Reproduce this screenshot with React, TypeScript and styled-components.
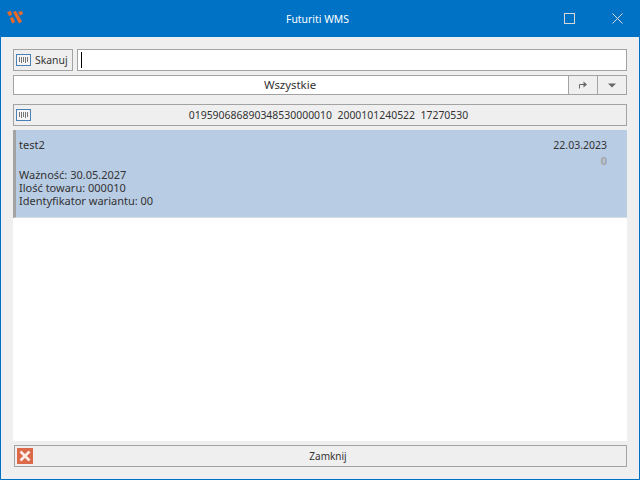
import styled, { createGlobalStyle } from "styled-components";

const GlobalStyle = createGlobalStyle`
  html, body {
    margin: 0;
    padding: 0;
    background: #0072c6;
  }
`;

const BORDER = "#a3a3a3";

const Window = styled.div`
  box-sizing: border-box;
  width: 640px;
  height: 480px;
  display: flex;
  flex-direction: column;
  border: 1px solid #0072c6;
  border-top: 0;
  background: #efefef;
  font-family: "Noto Sans", "DejaVu Sans", sans-serif;
  font-size: 11px;
  color: #333;
  overflow: hidden;
`;

const TitleBar = styled.div`
  height: 37px;
  flex: none;
  display: flex;
  align-items: center;
  background: #0072c6;
  color: #fff;
  margin: 0 -1px;
`;

const LogoBox = styled.div`
  width: 37px;
  display: flex;
  padding: 0 0 1px 7px;
  box-sizing: border-box;
`;

const Title = styled.div`
  flex: 1;
  text-align: center;
  padding-left: 50px;
  font-size: 10.4px;
`;

const WinButton = styled.div`
  width: 46px;
  height: 37px;
  display: flex;
  align-items: center;
  justify-content: center;
`;

const MaxButton = styled(WinButton)`
  padding-right: 4px;
  box-sizing: border-box;
`;

const Content = styled.div`
  flex: 1;
  min-height: 0;
  display: flex;
  flex-direction: column;
  padding: 12px;
`;

const Row = styled.div<{ $h: number; $mb: number }>`
  display: flex;
  height: ${(p) => p.$h}px;
  margin-bottom: ${(p) => p.$mb}px;
  flex: none;
`;

const Button = styled.div`
  box-sizing: border-box;
  height: 100%;
  display: flex;
  align-items: center;
  border: 1px solid ${BORDER};
  background: #efefef;
`;

const ScanButton = styled(Button)`
  width: 60px;
  padding-left: 2px;
  gap: 4px;
  margin-right: 4px;
  font-size: 10.4px;
`;

const Input = styled.div`
  box-sizing: border-box;
  flex: 1;
  border: 1px solid ${BORDER};
  background: #fff;
  display: flex;
  align-items: center;
  padding-left: 3px;
`;

const Caret = styled.div`
  width: 1px;
  height: 16px;
  background: #000;
`;

const Combo = styled.div`
  box-sizing: border-box;
  flex: 1;
  border: 1px solid ${BORDER};
  background: #fff;
  text-align: center;
  line-height: 18px;
  font-size: 11.4px;
  padding-right: 2px;
`;

const SideButton = styled(Button)`
  width: 30px;
  justify-content: center;
  margin-left: -1px;
`;

const WideButton = styled(Button)`
  flex: 1;
  padding-left: 2px;
`;

const WideLabel = styled.div`
  flex: 1;
  text-align: center;
  white-space: pre;
  font-size: 10.45px;
`;

const CloseLabel = styled.div`
  flex: 1;
  text-align: center;
  font-size: 10px;
  padding-right: 3px;
`;

const List = styled.div`
  flex: 1;
  min-height: 0;
  background: #fff;
  margin-bottom: 4px;
`;

const Card = styled.div`
  box-sizing: border-box;
  height: 88px;
  background: #b8cce4;
  border-left: 3px solid ${BORDER};
  border-bottom: 1px solid #d5dde6;
  padding: 7px 20px 0 3px;
  display: flex;
  justify-content: space-between;
`;

const CardLines = styled.div`
  line-height: 13px;
`;

const CardName = styled.div`
  margin-bottom: 16px;
  line-height: 15px;
`;

const CardSide = styled.div`
  text-align: right;
  padding-top: 1px;
  line-height: 15px;
  font-size: 10.5px;
`;

const Muted = styled.div`
  font-weight: 700;
  font-size: 11px;
  color: #a4a4a4;
`;

const CloseButton = styled(WideButton)`
  margin-left: 1px;
`;

const ScanIcon = () => (
  <svg width="15" height="12" viewBox="0 0 15 12">
    <rect x="0.5" y="0.5" width="14" height="11" fill="#f4f4f4" stroke="#4a7fb8" />
    <path d="M3.5 3v5M5.5 3v6M7.5 3v5M9.5 3v6M11.5 3v5" stroke="#777" />
  </svg>
);

export default function App() {
  return (
    <Window>
      <GlobalStyle />
      <TitleBar>
        <LogoBox>
          <svg width="16" height="14" viewBox="0 0 16 14">
            <path
              d="M0 1 4 0 5 4 2 5ZM3 7 6 6 8 11 5 12.5ZM6 1 9 0 15 10.5 12 12.5ZM11 1 15 0 16 3 13 4.5Z"
              fill="#e8692c"
            />
          </svg>
        </LogoBox>
        <Title>Futuriti WMS</Title>
        <MaxButton>
          <svg width="11" height="11" viewBox="0 0 11 11">
            <rect x="0.5" y="0.5" width="10" height="10" fill="none" stroke="#d8d8d8" />
          </svg>
        </MaxButton>
        <WinButton>
          <svg width="11" height="11" viewBox="0 0 11 11">
            <path d="M0.5 0.5 10.5 10.5M10.5 0.5 0.5 10.5" stroke="#d8d8d8" />
          </svg>
        </WinButton>
      </TitleBar>
      <Content>
        <Row $h={22} $mb={4}>
          <ScanButton>
            <ScanIcon />
            Skanuj
          </ScanButton>
          <Input>
            <Caret />
          </Input>
        </Row>
        <Row $h={20} $mb={9}>
          <Combo>Wszystkie</Combo>
          <SideButton>
            <svg width="8" height="8" viewBox="0 0 8 8">
              <path d="M0.5 7.5V3.5H5" fill="none" stroke="#666" />
              <path d="M4.5 0.5 8 3.5 4.5 6.5Z" fill="#666" />
            </svg>
          </SideButton>
          <SideButton>
            <svg width="8" height="5" viewBox="0 0 8 5">
              <path d="M0 0.5H8L4 4.5Z" fill="#666" />
            </svg>
          </SideButton>
        </Row>
        <Row $h={22} $mb={4}>
          <WideButton>
            <ScanIcon />
            <WideLabel>{"019590686890348530000010  2000101240522  17270530"}</WideLabel>
          </WideButton>
        </Row>
        <List>
          <Card>
            <CardLines>
              <CardName>test2</CardName>
              <div>Ważność: 30.05.2027</div>
              <div>Ilość towaru: 000010</div>
              <div>Identyfikator wariantu: 00</div>
            </CardLines>
            <CardSide>
              <div>22.03.2023</div>
              <Muted>0</Muted>
            </CardSide>
          </Card>
        </List>
        <Row $h={22} $mb={0}>
          <CloseButton>
            <svg width="16" height="16" viewBox="0 0 16 16">
              <rect width="16" height="16" fill="#dc6a4a" />
              <path d="M3.5 3.5 12.5 12.5M12.5 3.5 3.5 12.5" stroke="#fbeee9" strokeWidth="2.6" />
            </svg>
            <CloseLabel>Zamknij</CloseLabel>
          </CloseButton>
        </Row>
      </Content>
    </Window>
  );
}
